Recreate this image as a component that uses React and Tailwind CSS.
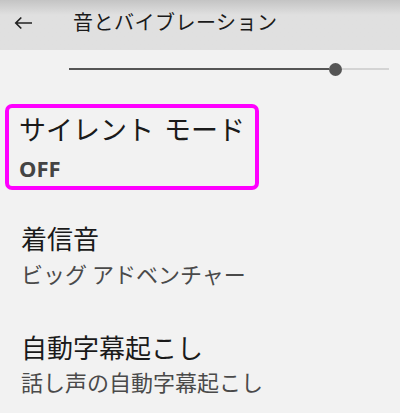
import React from "react";

export default function App() {
  const font = { fontFamily: '"Noto Sans CJK JP", "Noto Sans", sans-serif' };
  return (
    <div className="w-[400px] h-[413px] bg-[#f2f2f2] overflow-hidden" style={font}>
      <div className="h-[50px] flex items-start bg-gradient-to-b from-[#c4c4c4] via-[#e0e0e0] via-30% to-[#e0e0e0]">
        <svg width="20" height="20" viewBox="0 0 20 20" className="ml-[13px] mt-[13px]" fill="none" stroke="#222" strokeWidth="1.7">
          <path d="M19 10H2.8M8.3 4.5L2.8 10L8.3 15.5" />
        </svg>
        <div className="ml-[40px] mt-[12px] text-[20px] text-[#1a1a1a] leading-[20px] tracking-[0.5px]">音とバイブレーション</div>
      </div>
      <div className="h-[38px] flex items-center pl-[69px] pr-[11px]">
        <div className="flex-1 h-[2px] bg-[#555]"></div>
        <div className="w-[13px] h-[13px] rounded-full bg-[#555]"></div>
        <div className="w-[47px] h-[2px] bg-[#d4d4d4]"></div>
      </div>
      <div className="ml-[5px] mt-[16px] w-[254px] h-[86px] border-[4px] border-[#ff00ff] rounded-[7px] pl-[10px] pt-[7px]">
        <div className="text-[27px] text-[#1a1a1a] leading-[27px] [word-spacing:4px]">サイレント モード</div>
        <div className="mt-[15px] text-[22px] font-bold text-[#444] leading-[22px]" style={{ fontFamily: '"Noto Sans", sans-serif' }}>OFF</div>
      </div>
      <div className="pl-[21px] mt-[35px]">
        <div className="text-[26px] text-[#1a1a1a] leading-[26px]">着信音</div>
        <div className="mt-[11px] text-[22px] text-[#4a4a4a] leading-[22px]">ビッグ アドベンチャー</div>
      </div>
      <div className="pl-[21px] mt-[50px]">
        <div className="text-[26px] text-[#1a1a1a] leading-[26px]">自動字幕起こし</div>
        <div className="mt-[10px] text-[22px] text-[#4a4a4a] leading-[22px]">話し声の自動字幕起こし</div>
      </div>
    </div>
  );
}
